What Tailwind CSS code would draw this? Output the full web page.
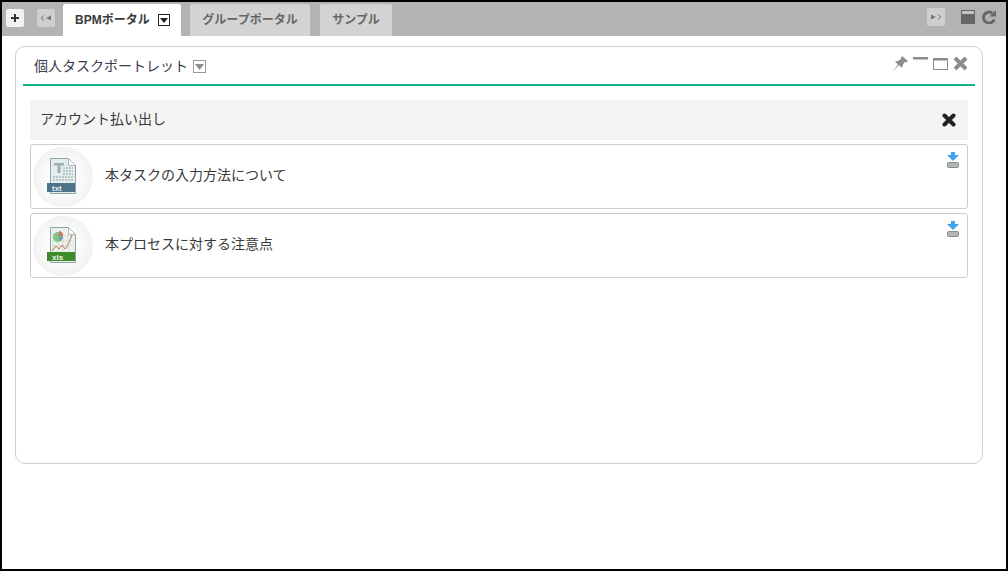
<!DOCTYPE html>
<html lang="ja">
<head>
  <meta charset="UTF-8" />
  <title>BPMポータル</title>
  <script src="https://cdn.jsdelivr.net/npm/@tailwindcss/browser@4"></script>
</head>
<body class="bg-white">
  <div class="w-[1008px] h-[571px] border-2 border-black overflow-hidden font-['Liberation_Sans','Noto_Sans_CJK_JP',sans-serif] text-[#3a3a3a]">
    <!-- tab bar -->
    <div class="h-[34px] bg-[#b3b3b3] flex items-end pl-[4px] pr-[10px]">
      <div class="self-start mt-[7px] w-[18px] h-[18px] bg-[#f2f2f2] rounded-[2px] flex items-center justify-center">
        <svg width="8" height="8" viewBox="0 0 8 8"><path d="M3 0h2v3h3v2H5v3H3V5H0V3h3z" fill="#333"/></svg>
      </div>
      <div class="self-start mt-[7px] ml-[13px] w-[18px] h-[18px] bg-[#cfcfcf] rounded-[2px] flex items-center justify-center">
        <svg width="12" height="6" viewBox="0 0 12 6"><path d="M4 0.500 1 3l3 2.500" fill="none" stroke="#777" stroke-width="1"/><path d="M11 0.500v5L6 3z" fill="#777"/></svg>
      </div>
      <div class="ml-[8px] w-[118px] h-[32px] bg-white rounded-t-[2px] flex items-center pl-[12px] text-[12px] font-bold">
        <span>BPMポータル</span>
        <span class="ml-[8px] w-[12px] h-[12px] border border-[#222] flex items-center justify-center">
          <svg width="8" height="5" viewBox="0 0 8 5"><path d="M0 0h8L4 5z" fill="#222"/></svg>
        </span>
      </div>
      <div class="ml-[9px] w-[120px] h-[32px] bg-[#d3d3d3] rounded-t-[2px] flex items-center justify-center text-[12px] font-bold text-[#666]">グループポータル</div>
      <div class="ml-[10px] w-[72px] h-[32px] bg-[#d3d3d3] rounded-t-[2px] flex items-center justify-center text-[12px] font-bold text-[#666]">サンプル</div>
      <div class="ml-auto self-start mt-[6px] w-[18px] h-[18px] bg-[#cfcfcf] rounded-[2px] flex items-center justify-center">
        <svg width="12" height="6" viewBox="0 0 12 6"><path d="M1 0.500v5L6 3z" fill="#777"/><path d="M8 0.500 11 3 8 5.500" fill="none" stroke="#777" stroke-width="1"/></svg>
      </div>
      <div class="self-start mt-[8px] ml-[16px] flex items-center gap-[7px]">
        <svg width="14" height="14" viewBox="0 0 14 14"><rect width="14" height="14" fill="#666"/><rect x="1" y="1" width="12" height="3" fill="#c4c4c4"/></svg>
        <svg width="14" height="14" viewBox="0 0 14 14"><path d="M12.200 9.500A5.500 5.500 0 1 1 10.500 3.300" fill="none" stroke="#666" stroke-width="3"/><path d="M7.500 6.500H14V0z" fill="#666"/></svg>
      </div>
    </div>

    <!-- portlet -->
    <div class="mt-[10px] ml-[13px] w-[968px] h-[418px] border border-[#d0d0d0] rounded-[10px] px-[7px] pt-[1px]">
      <div class="h-[38px] border-b-2 border-[#10b28c] flex items-center pl-[11px] pr-[7px]">
        <span class="text-[14px] mt-[1px] text-[#3a3a4a]">個人タスクポートレット</span>
        <span class="ml-[5px] mt-[1px] w-[13px] h-[13px] border border-[#999] flex items-center justify-center">
          <svg width="9" height="6" viewBox="0 0 9 6"><path d="M0 0h9L4.500 6z" fill="#8c8c8c"/></svg>
        </span>
        <div class="ml-auto self-start mt-[8px] flex items-start">
          <svg class="mr-[1px]" width="15" height="15" viewBox="0 0 15 15"><path d="M9 0l6 5-1.500 1-2.500.5-1.500 3.500-.5 2-3-3L0 15l5-6.500-3-3 2.500-.5 3-1.500L8 2z" fill="#8c8c8c"/></svg>
          <svg class="ml-[4px] mt-[1px]" width="15" height="3" viewBox="0 0 15 3"><rect y="0" width="15" height="2.500" fill="#8c8c8c"/></svg>
          <svg class="ml-[5px] mt-[2px]" width="15" height="12" viewBox="0 0 15 12"><rect x=".5" y=".5" width="14" height="11" fill="none" stroke="#8c8c8c"/><rect width="15" height="2.500" fill="#8c8c8c"/></svg>
          <svg class="ml-[5px]" width="15" height="15" viewBox="0 0 15 15"><path d="M2 2l11 11M13 2 2 13" stroke="#8c8c8c" stroke-width="4"/></svg>
        </div>
      </div>

      <div class="mt-[14px] mx-[7px]">
        <div class="h-[40px] bg-[#f4f4f4] flex items-center justify-between pl-[10px] pr-[12px] border-b border-[#f0f0f0]">
          <span class="text-[14px] mb-[1px]">アカウント払い出し</span>
          <svg width="14" height="14" viewBox="0 0 14 14"><path d="M2.500 2.500l9 9M11.500 2.500l-9 9" stroke="#222" stroke-width="4" stroke-linecap="round"/></svg>
        </div>

        <div class="mt-[4px] h-[65px] border border-[#ccc] rounded-[3px] flex pl-[2px] pr-[8px]">
          <div class="self-center w-[60px] h-[60px] rounded-full bg-[radial-gradient(circle,#fbfbfb_40%,#e9e9e9_100%)] flex items-center justify-center">
            <svg class="mr-[3px]" width="30" height="37" viewBox="0 0 30 37">
              <path d="M3.500 .5h18l7 7v28h-25z" fill="#e4ecec" stroke="#8fa3a8"/>
              <path d="M21.500 .5v7h7z" fill="#fff" stroke="#a9b8bc"/>
              <path d="M7 5h10v2.500h-3.500V15h-3V7.500H7z" fill="#9ab0b8"/>
              <path d="M16 10h10M16 13h10M16 16h10M6 19h20M6 22h20" stroke="#aabcc2" stroke-width="1.500" stroke-dasharray="2 1"/>
              <rect x="0" y="25" width="28" height="9" fill="#4b7488"/>
              <text x="5" y="32.500" font-size="8" font-weight="700" fill="#e8f0f2" font-family="Liberation Sans">txt</text>
            </svg>
          </div>
          <span class="self-center ml-[12px] mb-[2px] text-[14px]">本タスクの入力方法について</span>
          <svg class="ml-auto mt-[7px]" width="12" height="16" viewBox="0 0 12 16">
            <path d="M4 0h4v3h4L6 9 0 3h4z" fill="#3ea3ee"/>
            <rect x=".5" y="10.500" width="11" height="5" rx="1" fill="#b5b5b5" stroke="#8a8a8a"/>
            <rect x="9" y="12" width="2" height="1.500" fill="#7fdc7f"/>
          </svg>
        </div>

        <div class="mt-[4px] h-[65px] border border-[#ccc] rounded-[3px] flex pl-[2px] pr-[8px]">
          <div class="self-center w-[60px] h-[60px] rounded-full bg-[radial-gradient(circle,#fbfbfb_40%,#e9e9e9_100%)] flex items-center justify-center">
            <svg class="mr-[3px]" width="30" height="37" viewBox="0 0 30 37">
              <path d="M3.500 .5h18l7 7v28h-25z" fill="#eaf1ea" stroke="#8fa3a8"/>
              <path d="M21.500 .5v7h7z" fill="#fff" stroke="#a9b8bc"/>
              <path d="M6 5v20M11 5v20M16 5v20M21 9v16M6 9h20M6 14h20M6 19h20" stroke="#cfd9d2" stroke-width=".7"/>
              <circle cx="11" cy="10" r="5" fill="#7cc47f"/>
              <path d="M12 4a5 5 0 0 1 4 5h-4z" fill="#d9665c"/>
              <path d="M12 10h4a5 5 0 0 1-3 4z" fill="#6f8fd8"/>
              <path d="M5 24l4-5 3 3 3-4 3 4 3-4 4-10" fill="none" stroke="#c9765a" stroke-width="1"/>
              <rect x="0" y="25" width="28" height="9" fill="#3f8a2a"/>
              <text x="5" y="32.500" font-size="8" font-weight="700" fill="#eef6ea" font-family="Liberation Sans">xls</text>
            </svg>
          </div>
          <span class="self-center ml-[12px] mb-[2px] text-[14px]">本プロセスに対する注意点</span>
          <svg class="ml-auto mt-[7px]" width="12" height="16" viewBox="0 0 12 16">
            <path d="M4 0h4v3h4L6 9 0 3h4z" fill="#3ea3ee"/>
            <rect x=".5" y="10.500" width="11" height="5" rx="1" fill="#b5b5b5" stroke="#8a8a8a"/>
            <rect x="9" y="12" width="2" height="1.500" fill="#7fdc7f"/>
          </svg>
        </div>
      </div>
    </div>
  </div>
</body>
</html>
